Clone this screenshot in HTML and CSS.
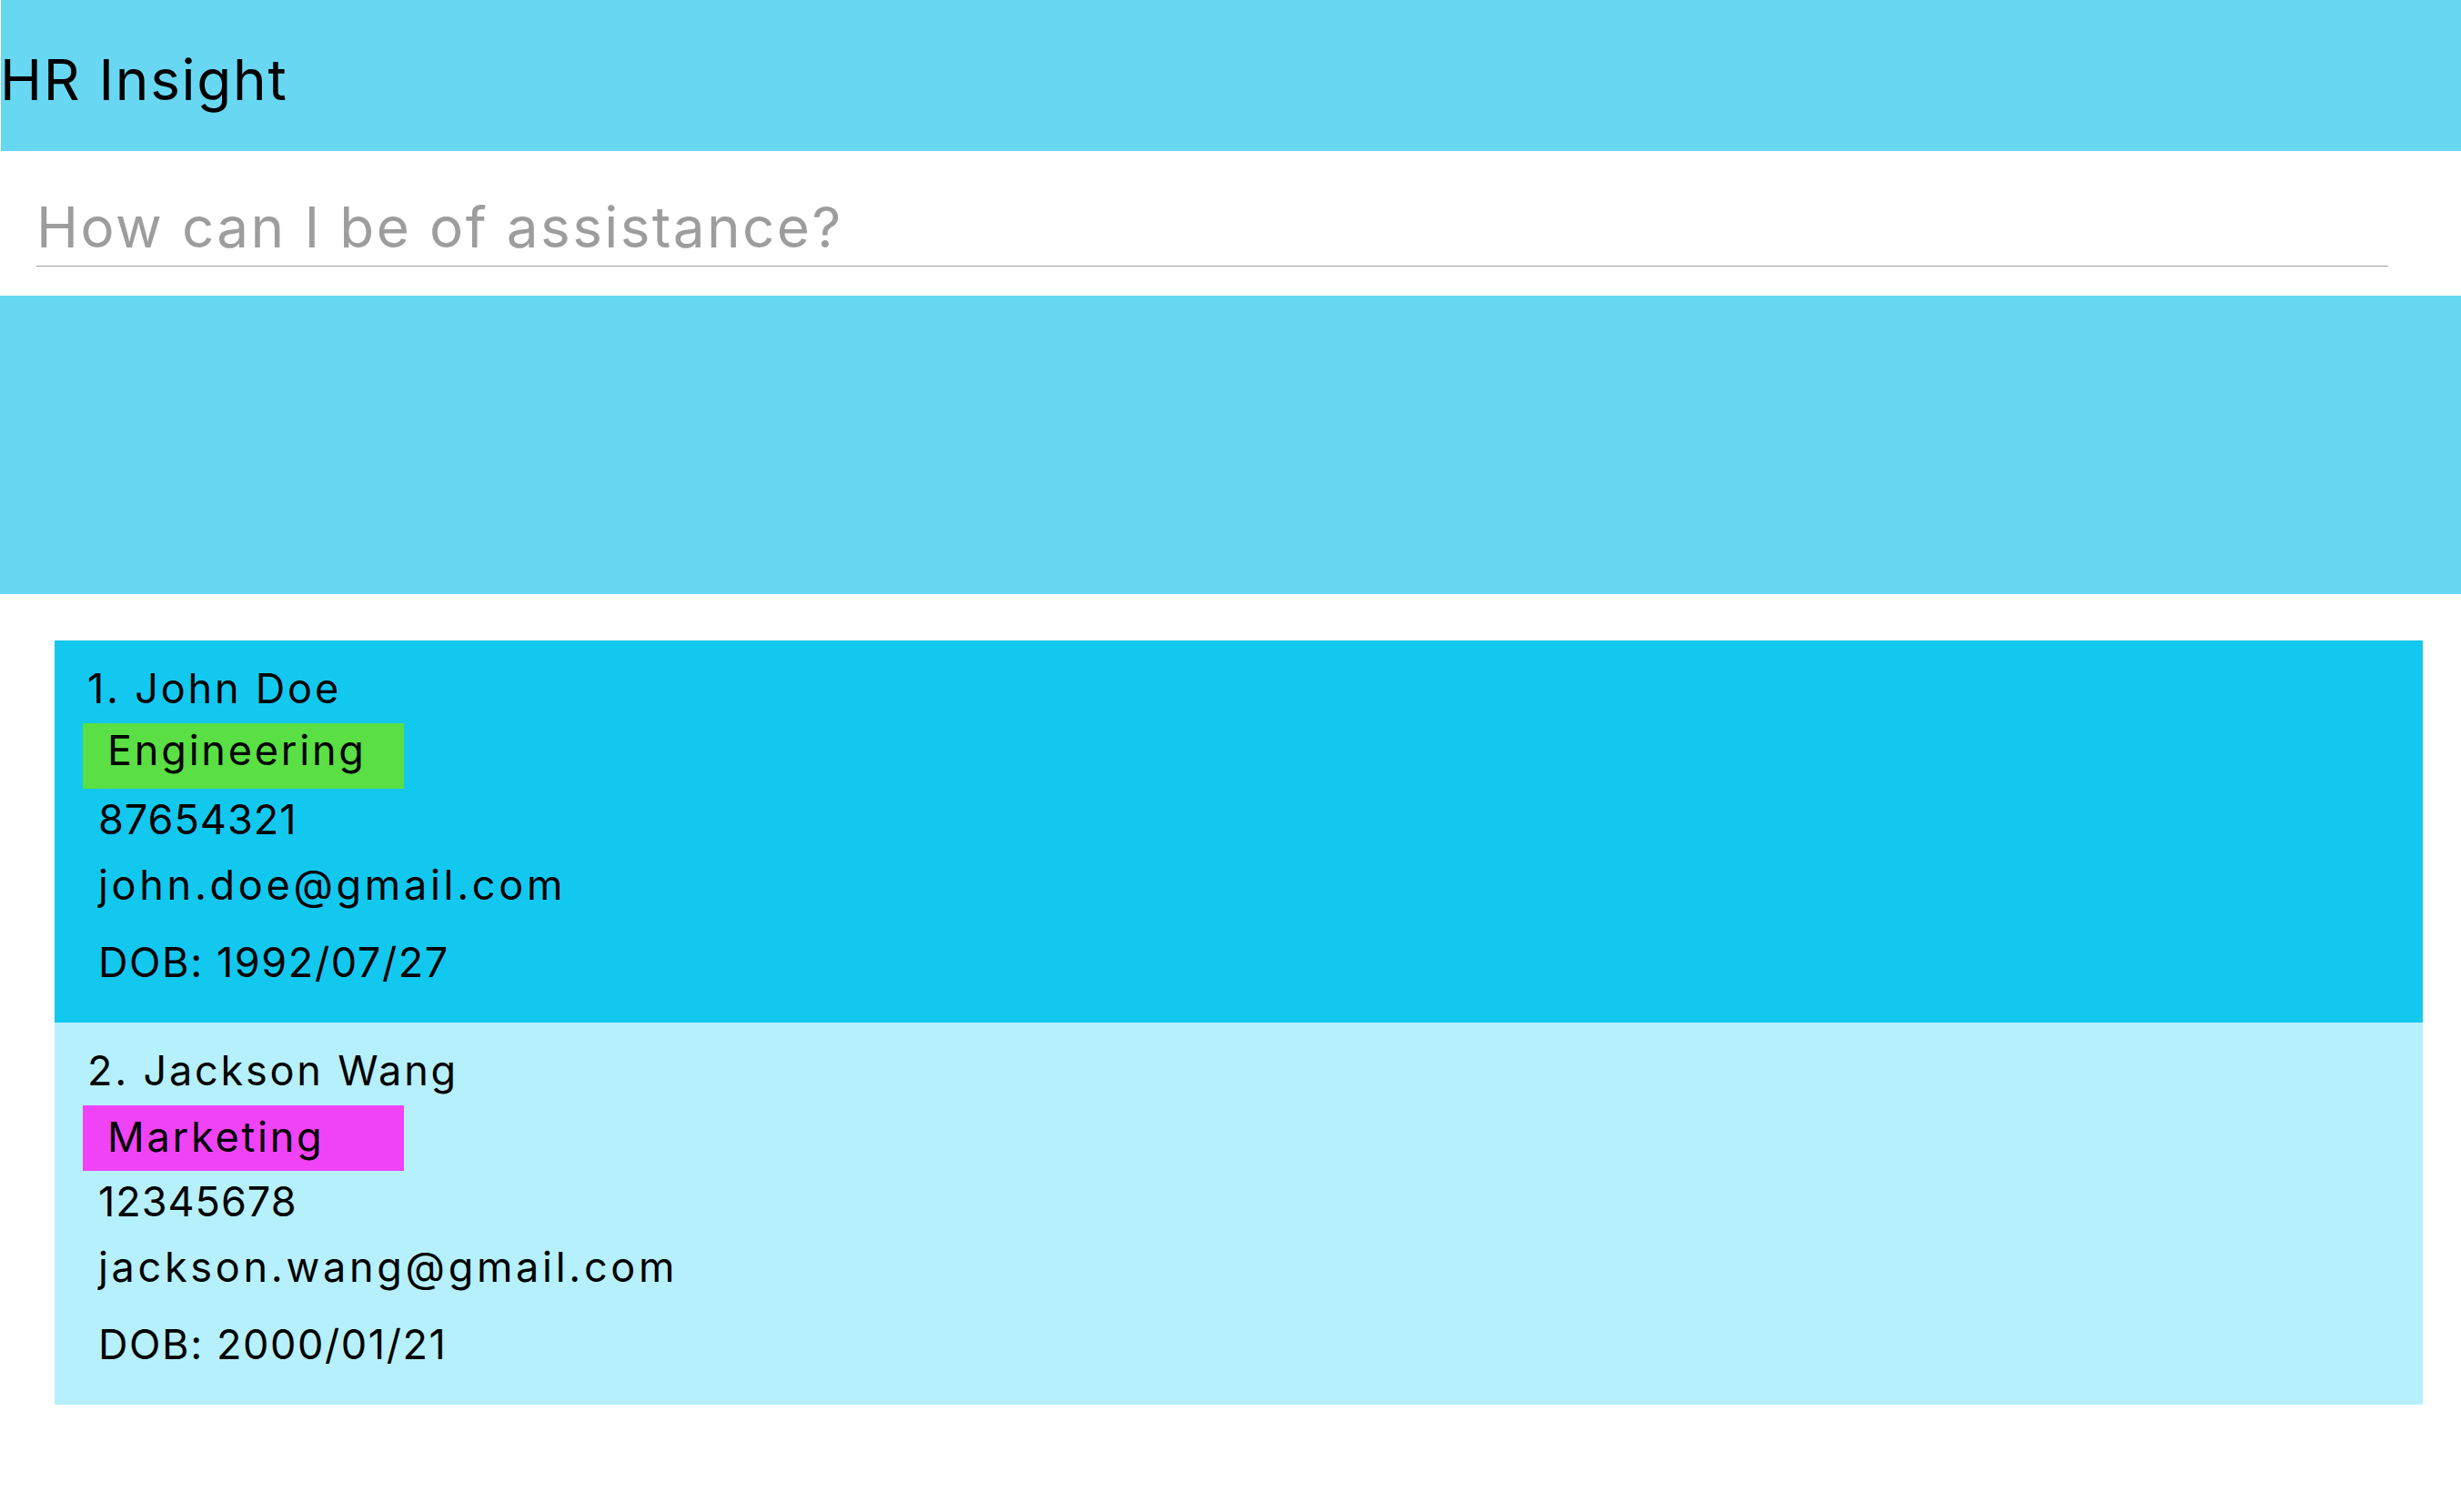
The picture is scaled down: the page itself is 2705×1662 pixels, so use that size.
FILE: index.html
```html
<!DOCTYPE html>
<html lang="en">
<head>
<meta charset="utf-8">
<title>HR Insight</title>
<link rel="stylesheet" href="styles.css">
</head>
<body>
<header class="topbar">
  <h1 class="brand">HR Insight</h1>
</header>
<div class="search">
  <input class="query" type="text" placeholder="How can I be of assistance?">
</div>
<section class="output"></section>
<ul class="people">
  <li class="card card--selected">
    <div class="card__name">1. John Doe</div>
    <div class="tag tag--engineering">Engineering</div>
    <div class="card__phone">87654321</div>
    <div class="card__email">john.doe@gmail.com</div>
    <div class="card__dob">DOB: 1992/07/27</div>
  </li>
  <li class="card">
    <div class="card__name">2. Jackson Wang</div>
    <div class="tag tag--marketing">Marketing</div>
    <div class="card__phone">12345678</div>
    <div class="card__email">jackson.wang@gmail.com</div>
    <div class="card__dob">DOB: 2000/01/21</div>
  </li>
</ul>
</body>
</html>
```

FILE: styles.css
```css
* { box-sizing: border-box; }

html, body {
  margin: 0;
  padding: 0;
  background: #ffffff;
  font-family: "Inter", "Open Sans", sans-serif;
  color: #000000;
}

.topbar {
  height: 166px;
  margin-left: 1px;
  background: #68d7f2;
  padding-top: 57px;
}

.brand {
  margin: 0 0 0 -1px;
  font-size: 62px;
  font-weight: 400;
  line-height: 1;
  letter-spacing: 1.7px;
}

.search {
  height: 159px;
  padding: 43px 0 0 40px;
}

.query {
  display: block;
  width: 2585px;
  height: 84px;
  padding: 0 0 3px 0;
  margin: 0;
  border: none;
  border-bottom: 1px solid #9e9e9e;
  outline: none;
  background: transparent;
  font-family: "Inter", "Open Sans", sans-serif;
  font-size: 62px;
  letter-spacing: 2.4px;
  color: #000;
}

.query::placeholder {
  color: #9d9d9d;
}

.output {
  height: 328px;
  background: #68d7f2;
}

.people {
  list-style: none;
  margin: 51px 42px 0 60px;
  padding: 0;
}

.card {
  height: 420px;
  background: #b6f0fc;
  padding-top: 28px;
  font-size: 45px;
  letter-spacing: 2.8px;
}

.card--selected {
  background: #13c8ef;
}

.card__name {
  line-height: 50px;
  padding-left: 36px;
}

.tag {
  width: 353px;
  height: 72px;
  margin: 13px 0 0 31px;
  padding: 0 0 0 27px;
  line-height: 66px;
}

.tag--engineering { background: #5adf44; line-height: 60px; }
.tag--marketing { background: #f043f5; padding-top: 2px; }

.card__phone,
.card__email,
.card__dob {
  padding-left: 48px;
}

.card__phone { line-height: 68px; letter-spacing: 1px; }
.card__email { line-height: 76px; letter-spacing: 3.7px; }
.card__dob { line-height: 94px; letter-spacing: 1.6px; }
```
